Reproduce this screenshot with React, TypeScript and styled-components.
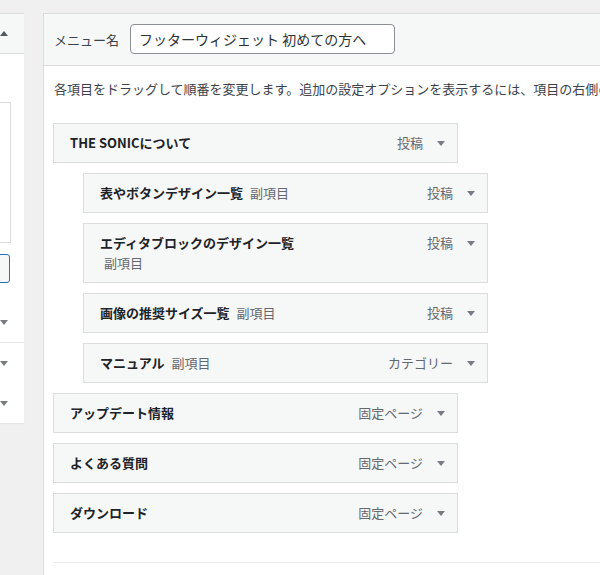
import styled, { createGlobalStyle } from 'styled-components';

const GlobalStyle = createGlobalStyle`
  html, body {
    margin: 0;
    padding: 0;
  }
  body {
    background: #f0f0f1;
    font-family: "Noto Sans CJK JP", "Noto Sans", sans-serif;
    font-size: 13px;
    color: #3c434a;
    overflow: hidden;
  }
`;

const Page = styled.div`
  display: flex;
  align-items: flex-start;
  gap: 19px;
  width: 600px;
  height: 575px;
  padding-top: 13px;
  box-sizing: border-box;
  overflow: hidden;
`;

/* left: "add menu items" accordion, mostly scrolled out of view */
const Sidebar = styled.aside`
  flex: none;
  width: 24px;
  overflow: hidden;
  background: #fff;
  border-top: 1px solid #dcdcde;
  box-shadow: 0 1px 1px rgba(0, 0, 0, 0.06);
`;

const SidebarInner = styled.div`
  width: 264px;
  margin-left: -240px;
`;

const SectionHead = styled.div`
  height: 39px;
  display: flex;
  align-items: center;
  justify-content: flex-end;
  padding-right: 16px;
  background: #f6f7f7;
  border-bottom: 1px solid #dcdcde;
`;

const SectionBody = styled.div`
  display: flex;
  flex-direction: column;
  align-items: flex-end;
  padding: 48px 13px 19px 20px;
`;

const ListBox = styled.div`
  width: 100%;
  height: 141px;
  box-sizing: border-box;
  border: 1px solid #dcdcde;
`;

const AddButton = styled.div`
  width: 110px;
  height: 29px;
  margin-top: 11px;
  margin-right: 1px;
  box-sizing: border-box;
  border: 1px solid #2271b1;
  border-radius: 3px;
  background: #f6f7f7;
`;

const SectionRow = styled.div<{ $divided?: boolean }>`
  height: 40px;
  display: flex;
  align-items: center;
  justify-content: flex-end;
  padding-right: 16px;
  border-top: ${(p) => (p.$divided ? '1px solid #e4e4e6' : 'none')};
`;

const Caret = styled.span<{ $up?: boolean; $color?: string }>`
  display: block;
  width: 0;
  height: 0;
  border-left: 4px solid transparent;
  border-right: 4px solid transparent;
  ${(p) =>
    p.$up
      ? `border-bottom: 5px solid ${p.$color || '#50575e'};`
      : `border-top: 5px solid ${p.$color || '#787c82'};`}
`;

/* right: menu structure editor */
const Editor = styled.section`
  flex: none;
  width: 640px;
  background: #fff;
  border: 1px solid #dcdcde;
  border-bottom: none;
`;

const EditorHead = styled.div`
  height: 51px;
  display: flex;
  align-items: center;
  gap: 11px;
  padding-left: 10px;
  background: #f6f7f7;
  border-bottom: 1px solid #dcdcde;
`;

const Label = styled.label`
  color: #3c434a;
  font-size: 13px;
`;

const NameInput = styled.input`
  width: 265px;
  height: 30px;
  box-sizing: border-box;
  margin: 0 0 1px;
  padding: 0 8px;
  border: 1px solid #8c8f94;
  border-radius: 4px;
  background: #fff;
  color: #2c3338;
  font-family: inherit;
  font-size: 14px;
  outline: none;
`;

const EditorBody = styled.div`
  padding: 13px 0 0 9px;
`;

const Hint = styled.p`
  margin: 0 0 0 1px;
  line-height: 20px;
  white-space: nowrap;
  color: #3c434a;
`;

const MenuList = styled.ul`
  list-style: none;
  margin: 24px 0 0;
  padding: 0;
  display: flex;
  flex-direction: column;
  gap: 10px;
`;

const Item = styled.li<{ $depth: number }>`
  width: 405px;
  box-sizing: border-box;
  margin-left: ${(p) => p.$depth * 30}px;
  display: flex;
  align-items: flex-start;
  padding: 9px 12px 9px 16px;
  line-height: 20px;
  background: #f6f7f7;
  border: 1px solid #dcdcde;
`;

const TitleArea = styled.div`
  width: 210px;
`;

const Title = styled.span`
  font-weight: 700;
  color: #1d2327;
`;

const SubLabel = styled.span`
  display: inline-block;
  margin-left: 4px;
  white-space: nowrap;
  color: #646970;
`;

const ItemType = styled.span`
  margin-left: auto;
  color: #646970;
`;

const Toggle = styled.span`
  height: 20px;
  display: flex;
  align-items: center;
  margin-left: 14px;
`;

const SettingsRule = styled.div`
  margin-top: 29px;
  border-top: 1px solid #ebebeb;
  height: 40px;
`;

const items = [
  { title: 'THE SONICについて', type: '投稿', depth: 0 },
  { title: '表やボタンデザイン一覧', type: '投稿', depth: 1 },
  { title: 'エディタブロックのデザイン一覧', type: '投稿', depth: 1 },
  { title: '画像の推奨サイズ一覧', type: '投稿', depth: 1 },
  { title: 'マニュアル', type: 'カテゴリー', depth: 1 },
  { title: 'アップデート情報', type: '固定ページ', depth: 0 },
  { title: 'よくある質問', type: '固定ページ', depth: 0 },
  { title: 'ダウンロード', type: '固定ページ', depth: 0 },
];

function App() {
  return (
    <>
      <GlobalStyle />
      <Page>
        <Sidebar>
          <SidebarInner>
            <SectionHead>
              <Caret $up />
            </SectionHead>
            <SectionBody>
              <ListBox />
              <AddButton />
            </SectionBody>
            <SectionRow>
              <Caret />
            </SectionRow>
            <SectionRow $divided>
              <Caret />
            </SectionRow>
            <SectionRow>
              <Caret />
            </SectionRow>
          </SidebarInner>
        </Sidebar>

        <Editor>
          <EditorHead>
            <Label htmlFor="menu-name">メニュー名</Label>
            <NameInput id="menu-name" defaultValue="フッターウィジェット 初めての方へ" />
          </EditorHead>
          <EditorBody>
            <Hint>
              各項目をドラッグして順番を変更します。追加の設定オプションを表示するには、項目の右側の矢印をクリックしてください。
            </Hint>
            <MenuList>
              {items.map((item) => (
                <Item key={item.title} $depth={item.depth}>
                  <TitleArea>
                    <Title>{item.title}</Title>
                    {item.depth > 0 && (
                      <>
                        {' '}
                        <SubLabel>副項目</SubLabel>
                      </>
                    )}
                  </TitleArea>
                  <ItemType>{item.type}</ItemType>
                  <Toggle>
                    <Caret />
                  </Toggle>
                </Item>
              ))}
            </MenuList>
            <SettingsRule />
          </EditorBody>
        </Editor>
      </Page>
    </>
  );
}

export default App;
